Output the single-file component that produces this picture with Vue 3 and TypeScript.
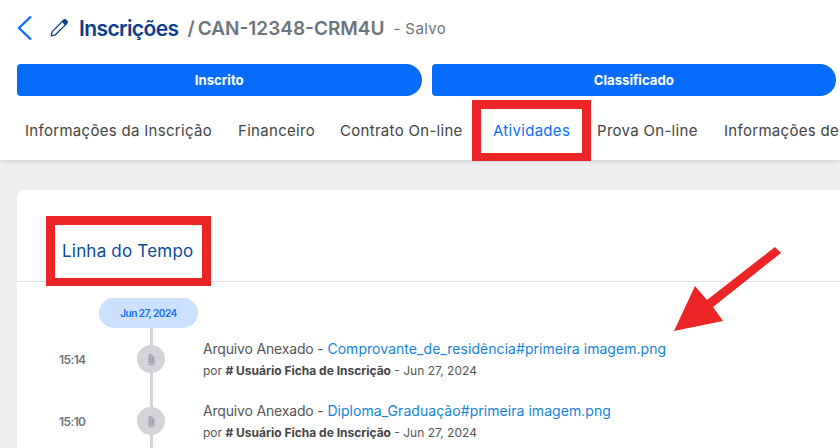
<template>
  <div class="page">
    <header class="top">
      <div class="title-row">
        <svg class="back" viewBox="0 0 16 26" fill="none" stroke="currentColor" stroke-width="2.4">
          <path d="M14 1.5 2 13l12 11.5" />
        </svg>
        <svg class="pencil" viewBox="0 0 18 18" fill="none" stroke="currentColor" stroke-width="1.3" stroke-linejoin="round">
          <path d="M1.2 16.8l1-4.2L12.4 2.4l3.2 3.2L5.4 15.8z" />
          <path d="M12.4 2.4l1.2-1.2a1.6 1.6 0 0 1 2.3 0l.9.9a1.6 1.6 0 0 1 0 2.3l-1.2 1.2z" fill="currentColor" />
        </svg>
        <h1 class="title">Inscrições</h1>
        <span class="code"><span class="slash">/</span>CAN-12348-CRM4U</span>
        <span class="saved">- Salvo</span>
      </div>
      <div class="steps">
        <button v-for="step in steps" :key="step" class="step">{{ step }}</button>
      </div>
      <nav class="tabs">
        <a
          v-for="tab in tabs"
          :key="tab.label"
          class="tab"
          :class="{ active: tab.label === 'Atividades' }"
          :style="{ width: tab.width + 'px' }"
        >{{ tab.label }}</a>
      </nav>
    </header>

    <main class="content">
      <section class="card">
        <h2 class="card-title">Linha do Tempo</h2>
        <div class="timeline">
          <span class="date-pill">Jun 27, 2024</span>
          <div v-for="item in items" :key="item.file" class="row">
            <span class="time">{{ item.time }}</span>
            <span class="dot">
              <svg viewBox="0 0 24 24" fill="none" stroke="currentColor" stroke-width="2.2" stroke-linecap="round">
                <path d="M16.5 7v10a4.5 4.5 0 0 1-9 0V6a3 3 0 0 1 6 0v10a1.5 1.5 0 0 1-3 0V7" />
              </svg>
            </span>
            <div class="info">
              <p class="line"><span class="prefix">Arquivo Anexado - </span><a class="file">{{ item.file }}</a></p>
              <p class="by">por <b># Usuário Ficha de Inscrição</b> - Jun 27, 2024</p>
            </div>
          </div>
        </div>
      </section>
    </main>

    <!-- marcações vermelhas por cima do print -->
    <div class="mark mark-tab"></div>
    <div class="mark mark-title"></div>
    <svg class="arrow" viewBox="0 0 840 448">
      <path d="M775 247 781 253 713 307 723 321 674 331 695 286 707 300z" fill="#ec2626" />
    </svg>
  </div>
</template>

<script setup lang="ts">
interface TimelineItem {
  time: string
  file: string
}

const steps = ['Inscrito', 'Classificado']

const tabs = [
  { label: 'Informações da Inscrição', width: 213 },
  { label: 'Financeiro', width: 102 },
  { label: 'Contrato On-line', width: 153 },
  { label: 'Atividades', width: 104 },
  { label: 'Prova On-line', width: 127 },
  { label: 'Informações de', width: 129 }
]

const items: TimelineItem[] = [
  { time: '15:14', file: 'Comprovante_de_residência#primeira imagem.png' },
  { time: '15:10', file: 'Diploma_Graduação#primeira imagem.png' }
]
</script>

<style>
html,
body {
  margin: 0;
  overflow: hidden;
}
</style>

<style scoped>
.page {
  position: relative;
  width: 840px;
  height: 448px;
  overflow: hidden;
  background: #eceef0;
  font-family: Inter, "Liberation Sans", sans-serif;
}

.top {
  height: 160px;
  box-sizing: border-box;
  padding: 14px 4px 0 17px;
  background: #fff;
  box-shadow: 0 1px 6px rgba(0, 0, 0, 0.14);
}

.title-row {
  display: flex;
  align-items: center;
  height: 28px;
}

.back {
  width: 16px;
  height: 26px;
  color: #0d6efd;
}

.pencil {
  width: 18px;
  height: 18px;
  margin-left: 17px;
  color: #0b3d8c;
}

.title {
  margin: 0 0 0 11px;
  font-size: 21px;
  font-weight: 600;
  letter-spacing: -0.6px;
  color: #0b3d8c;
}

.code {
  margin-left: 9px;
  font-size: 19px;
  font-weight: 600;
  color: #6c757d;
}

.slash {
  margin-right: 3px;
}

.saved {
  margin-left: 9px;
  font-size: 15px;
  letter-spacing: 0.4px;
  color: #6c757d;
}

.steps {
  display: flex;
  gap: 10px;
  margin-top: 22px;
}

.step {
  flex: 1;
  height: 32px;
  padding: 0;
  border: 0;
  border-radius: 4px 16px 16px 4px;
  background: #066cfb;
  color: #fff;
  font-family: Inter, sans-serif;
  font-size: 13.2px;
  font-weight: 700;
}

.tabs {
  display: flex;
  margin-left: -5px;
  white-space: nowrap;
}

.tab {
  flex: none;
  box-sizing: border-box;
  padding-left: 13px;
  font-size: 15px;
  letter-spacing: 0.3px;
  line-height: 69px;
  color: #444;
}

.tab.active {
  color: #0d6efd;
}

.content {
  padding: 30px 0 0 17px;
}

.card {
  height: 300px;
  border-radius: 8px 0 0 0;
  background: #fff;
}

.card-title {
  height: 92px;
  box-sizing: border-box;
  margin: 0;
  padding: 51px 0 0 45px;
  border-bottom: 1px solid #e2e3e5;
  font-size: 17px;
  font-weight: 400;
  letter-spacing: 0.2px;
  color: #0b4a9c;
}

.timeline {
  position: relative;
  padding: 16px 0 0 42px;
}

.timeline::before {
  content: "";
  position: absolute;
  left: 133px;
  top: 30px;
  bottom: -100px;
  width: 3px;
  background: #d2d3d8;
}

.date-pill {
  position: relative;
  display: block;
  width: 99px;
  height: 30px;
  margin-left: 40px;
  border-radius: 15px;
  background: #cce0ff;
  color: #0d6efd;
  font-size: 10px;
  font-weight: 600;
  letter-spacing: -0.5px;
  line-height: 30px;
  text-align: center;
}

.row {
  position: relative;
  display: flex;
  align-items: center;
  height: 62px;
}

.time {
  width: 78px;
  font-size: 12px;
  font-weight: 600;
  letter-spacing: -0.6px;
  color: #6c757d;
}

.dot {
  display: flex;
  align-items: center;
  justify-content: center;
  width: 28px;
  height: 28px;
  border-radius: 50%;
  background: #d3d4d9;
  color: #9b9da4;
}

.dot svg {
  width: 13px;
  height: 13px;
}

.info {
  margin-left: 38px;
}

.line {
  margin: 0;
  font-size: 14px;
  line-height: 18px;
  color: #555;
}

.prefix {
  letter-spacing: -0.17px;
}

.file {
  letter-spacing: 0.05px;
  color: #1683d8;
}

.by {
  margin: 5px 0 0;
  font-size: 12px;
  line-height: 16px;
  color: #555;
}

.by b {
  color: #444;
}

.mark {
  position: absolute;
  box-sizing: border-box;
  border: 9px solid #ec2626;
  border-bottom-width: 8px;
}

.mark-tab {
  left: 472px;
  top: 100px;
  width: 119px;
  height: 61px;
}

.mark-title {
  left: 46px;
  top: 216px;
  width: 165px;
  height: 70px;
}

.arrow {
  position: absolute;
  inset: 0;
  width: 840px;
  height: 448px;
}
</style>
